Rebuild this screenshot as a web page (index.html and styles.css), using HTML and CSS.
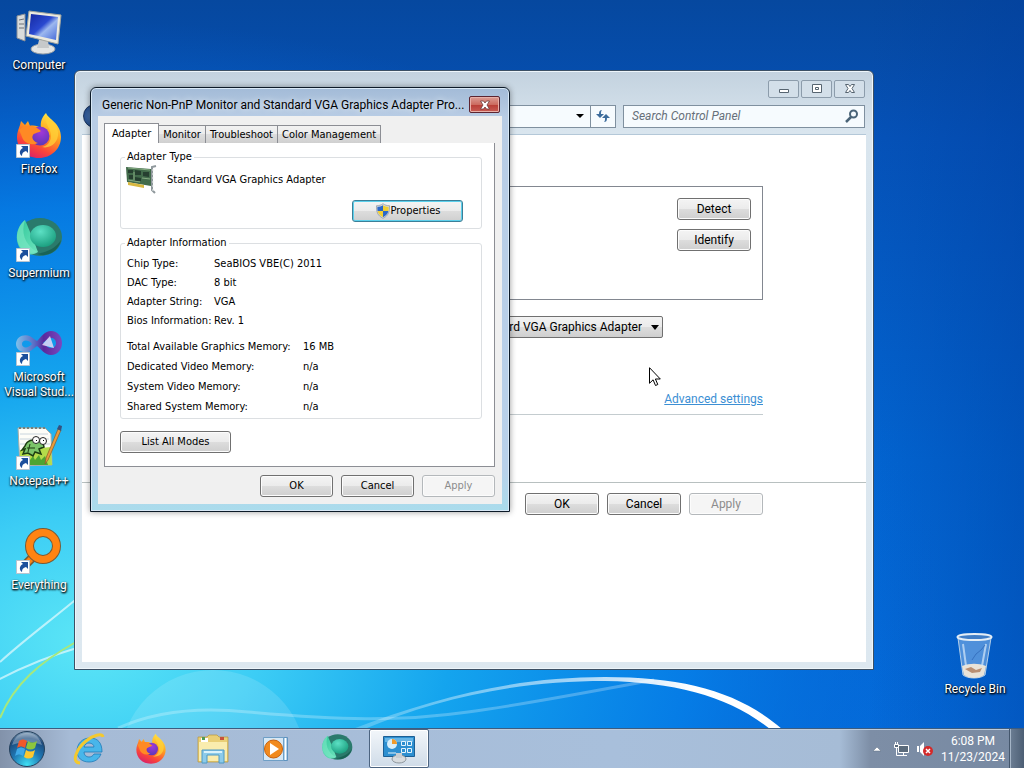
FILE: index.html
```html
<!DOCTYPE html>
<html lang="en">
<head>
  <meta charset="UTF-8" />
  <title>Desktop</title>
  <link rel="stylesheet" href="styles.css">
</head>
<body>

<svg width="0" height="0" class="defs" aria-hidden="true">
  <defs>
    <linearGradient id="ffBody" x1="0.8" y1="0" x2="0.3" y2="1">
      <stop offset="0" stop-color="#fff04a"/>
      <stop offset="0.4" stop-color="#ffa31f"/>
      <stop offset="0.75" stop-color="#fb4638"/>
      <stop offset="1" stop-color="#d9206a"/>
    </linearGradient>
    <radialGradient id="ffGlobe" cx="0.55" cy="0.3" r="0.7">
      <stop offset="0" stop-color="#a238d8"/>
      <stop offset="1" stop-color="#5b38b8"/>
    </radialGradient>
    <linearGradient id="smLight" x1="0" y1="0" x2="1" y2="1">
      <stop offset="0" stop-color="#2fc79a"/>
      <stop offset="1" stop-color="#6fe3bd"/>
    </linearGradient>
    <radialGradient id="smBall" cx="0.4" cy="0.3" r="0.8">
      <stop offset="0" stop-color="#5ce0c4"/>
      <stop offset="1" stop-color="#149878"/>
    </radialGradient>
    <linearGradient id="screen" x1="0" y1="0" x2="1" y2="1">
      <stop offset="0" stop-color="#1428a0"/>
      <stop offset="0.45" stop-color="#2a49d0"/>
      <stop offset="0.6" stop-color="#9db8ef"/>
      <stop offset="1" stop-color="#4468d8"/>
    </linearGradient>
    <linearGradient id="vs" x1="0" y1="0" x2="1" y2="0">
      <stop offset="0" stop-color="#7fc0ea"/>
      <stop offset="0.4" stop-color="#5a6cc4"/>
      <stop offset="0.6" stop-color="#5a2a9c"/>
      <stop offset="1" stop-color="#7a48c0"/>
    </linearGradient>
    <symbol id="firefox" viewBox="0 0 48 48">
      <path fill="url(#ffBody)" d="M24 46C11 46 2 37 2 25c0-5 2-9 3-12l1-4 4 4 3-4 2 5c4-1 8 0 11 2-1-6 1-11 5-15 2 6 15 10 15 24 0 12-10 21-22 21z"/>
      <circle cx="25" cy="24" r="9.500" fill="url(#ffGlobe)"/>
      <path fill="#ff8a24" d="M4 18c5-5 12-6 18-2l4 3c-3 2-7 2-8 4-2 3 1 7 5 8-7 3-14 0-16-6-1-3-2-5-3-7z"/>
      <path fill="#ffd23a" d="M31 3c-2 9 5 13 5 21 0 6-4 10-9 11 8 2 17-4 16-15C42 12 34 9 31 3z" opacity=".75"/>
    </symbol>
    <symbol id="supermium" viewBox="0 0 48 48">
      <ellipse cx="25" cy="21" rx="22" ry="19" fill="#2a7a6c"/>
      <path fill="url(#smLight)" d="M10 4C-1 13-1 30 10 37c4 2 9 2 13-1-3-8-7-18-13-32z"/>
      <ellipse cx="28" cy="20" rx="13" ry="11" fill="url(#smBall)"/>
      <path fill="#155e50" d="M22 38c10 4 22-3 24-14-4 7-13 12-24 14z" opacity=".8"/>
      <path fill="#7fe9c6" d="M10 4C6 16 9 28 22 36 10 40 1 30 2 19 3 12 6 7 10 4z" opacity=".6"/>
    </symbol>
    <symbol id="shortcut" viewBox="0 0 14 14">
      <path fill="#fff" stroke="#b8c4d0" d="M.5.500h13v13H.500z"/>
      <path fill="#1c4f9c" d="M5 2h7v7l-2-2c-3 1-4 2-4 5-3-2-3-6 1-8z"/>
    </symbol>
    <symbol id="shield" viewBox="0 0 16 16">
      <path fill="#d6dbe2" stroke="#8c9299" stroke-width=".7" d="M8 .7c2 1.500 4 2 6.500 2 .2 6-1 10-6.500 12.600C2.500 12.700 1.300 8.700 1.500 2.700c2.500 0 4.500-.5 6.500-2z"/>
      <path fill="#2c68c8" d="M8 2.200V8H2.600c-.3-1.300-.3-2.600-.2-4.200 2 0 3.800-.4 5.600-1.600z"/>
      <path fill="#f3cf32" d="M8 2.200V8h5.400c.3-1.300.3-2.600.2-4.200-2 0-3.800-.4-5.600-1.600zM8 8v6.200C5 12.700 3.200 10.700 2.600 8z"/>
      <path fill="#2c68c8" d="M8 8v6.200c3-1.500 4.800-3.500 5.400-6.200z"/>
    </symbol>
  </defs>
</svg>

<main class="desktop">
  <svg class="wallpaper" viewBox="0 0 1024 768" preserveAspectRatio="none" aria-hidden="true">
    <defs>
      <linearGradient id="sky" x1="0" y1="0" x2="0" y2="1">
        <stop offset="0" stop-color="#06489f"/>
        <stop offset="0.18" stop-color="#0552b8"/>
        <stop offset="0.6" stop-color="#0264d0"/>
        <stop offset="1" stop-color="#046cdc"/>
      </linearGradient>
      <radialGradient id="glow" gradientUnits="userSpaceOnUse" cx="0" cy="0" r="1" gradientTransform="translate(90 640) scale(860 620)">
        <stop offset="0" stop-color="#5ce6f6"/>
        <stop offset="0.2" stop-color="#3ccdf5"/>
        <stop offset="0.42" stop-color="#14a4ee"/>
        <stop offset="0.7" stop-color="#067fe8" stop-opacity=".85"/>
        <stop offset="1" stop-color="#0560d0" stop-opacity="0"/>
      </radialGradient>
      <linearGradient id="edge" x1="0" y1="0" x2="1" y2="0">
        <stop offset="0.85" stop-color="#003c9c" stop-opacity="0"/>
        <stop offset="1" stop-color="#003c9c" stop-opacity=".4"/>
      </linearGradient>
      <linearGradient id="arc" gradientUnits="userSpaceOnUse" x1="350" y1="0" x2="780" y2="0">
        <stop offset="0" stop-color="#fff" stop-opacity=".2"/>
        <stop offset="0.5" stop-color="#fff" stop-opacity=".6"/>
        <stop offset="0.8" stop-color="#fff"/>
      </linearGradient>
    </defs>
    <path fill="url(#sky)" d="M0 0h1024v768H0z"/>
    <path fill="url(#glow)" d="M0 0h1024v768H0z"/>
    <path fill="url(#edge)" d="M0 0h1024v768H0z"/>
    <circle cx="213" cy="763" r="93" fill="#fff" opacity=".13"/>
    <path fill="none" stroke="#fff" stroke-opacity=".25" stroke-width="3" d="M118 728c40-18 84-21 130-16 90 8 150 10 220 0 60-8 120-20 186-32"/>
    <path fill="url(#arc)" d="M350 730c90-35 170-53 255-53 80 0 134 15 177 52h-12c-40-32-94-47-165-48-85 0-165 16-243 49z"/>
    <path fill="none" stroke="#fff" stroke-opacity=".6" stroke-width="2" d="M-4 681c26-14 50-24 84-34M0 662c24-22 54-44 80-66"/>
    <path fill="none" stroke="#a6e87c" stroke-width="2" d="M0 718c14-34 40-56 76-76"/>
  </svg>

  <nav class="icons" aria-label="Desktop icons">
    <a class="icon" href="#">
      <svg class="pic" viewBox="0 0 48 48">
        <path fill="#d9dcdc" stroke="#8a8f96" d="M2 8l8-2v27l-8-3z"/>
        <path stroke="#6c7076" d="M4 12l5-1M4 16l5 0M4 20h5"/>
        <ellipse cx="28" cy="41" rx="12" ry="5" fill="#e3e5e4" stroke="#9ba0a4"/>
        <path fill="#c6c9ca" d="M24 32h9l1 8H22z"/>
        <path fill="#eceadf" stroke="#a2a59f" d="M14 3l32 4-3 29-32-8z"/>
        <path fill="url(#screen)" d="M16 6l27 3-2 23-27-6z"/>
      </svg>
      <span>Computer</span>
    </a>
    <a class="icon" href="#">
      <svg class="pic"><use href="#firefox"/></svg>
      <svg class="arrow"><use href="#shortcut"/></svg>
      <span>Firefox</span>
    </a>
    <a class="icon" href="#">
      <svg class="pic"><use href="#supermium"/></svg>
      <svg class="arrow"><use href="#shortcut"/></svg>
      <span>Supermium</span>
    </a>
    <a class="icon" href="#">
      <svg class="pic" viewBox="0 0 48 48">
        <path fill="url(#vs)" fill-rule="evenodd" d="M1 24c0-9 12-12 18-5l3 2c4-4 8-10 14-10 7 0 11 6 11 12s-4 12-11 12c-6 0-10-6-14-9l-4 3C12 35 1 32 1 24zm6 0c0 4 6 5 10 0-4-5-10-4-10 0zm21-1c3 3 6 5 8 5 3 0 5-2 5-5s-2-5-5-5c-2 0-5 2-8 5z"/>
        <path fill="#e4d8f6" d="M27 25l8-9 4 12z" opacity=".85"/>
      </svg>
      <svg class="arrow"><use href="#shortcut"/></svg>
      <span>Microsoft Visual Stud...</span>
    </a>
    <a class="icon" href="#">
      <svg class="pic" viewBox="0 0 48 48">
        <path fill="#fdfdf8" stroke="#a9ada5" d="M3 4h27l6 6 1 31-32 1z"/>
        <path fill="none" stroke="#77807a" stroke-width="2" stroke-dasharray="2 2" d="M4 4h26"/>
        <path stroke="#c8d4dd" d="M5 10h28M5 15h29M5 20h30"/>
        <path fill="#b4dc4a" d="M5 26l31-3 1 18H5z"/>
        <path fill="#4ea432" d="M15 36l3-4 2 4 4-5 2 5 4-4 3 9H15z"/>
        <path fill="#7cc46a" stroke="#1c3d12" stroke-width="1.500" d="M10 22c2-6 8-7 13-5l5 2 1 4-5 2 2 5-6-2-2 4-5-3-5 1 2-5-3 1z"/>
        <path stroke="#1c3d12" d="M12 24h8M15 20l-2 8"/>
        <circle cx="21" cy="16" r="3.500" fill="#fff" stroke="#222"/>
        <circle cx="28" cy="17" r="3.500" fill="#fff" stroke="#222"/>
        <path d="M21 16h1v1h-1zM28 16h1v1h-1z"/>
        <path fill="#e89c3c" stroke="#8a5a28" stroke-width=".7" d="M43 5l3 1-13 30-3 4 1-6z"/>
        <path fill="#35507e" d="M44 1l3 1-1 5-4-2z"/>
      </svg>
      <svg class="arrow"><use href="#shortcut"/></svg>
      <span>Notepad++</span>
    </a>
    <a class="icon" href="#">
      <svg class="pic" viewBox="0 0 48 48">
        <path stroke="#7b5a34" stroke-width="9" d="M19 28L8 39"/>
        <path stroke="#ff8412" stroke-width="6" d="M21 26L8 39"/>
        <circle cx="28" cy="18" r="13.500" fill="none" stroke="#7b5a34" stroke-width="9"/>
        <circle cx="28" cy="18" r="13.500" fill="none" stroke="#ff8412" stroke-width="7"/>
      </svg>
      <svg class="arrow"><use href="#shortcut"/></svg>
      <span>Everything</span>
    </a>
  </nav>

  <a class="icon recycle" href="#">
    <svg class="pic" viewBox="0 0 48 48">
      <path fill="#9cc4ee" fill-opacity=".5" stroke="#b4cfe8" d="M7 6l5 37c5 4 17 4 22 0l6-37z"/>
      <path fill="#e9e3d8" d="M11 34c8-3 16-3 24 0l-2 9c-5 4-15 4-20 0z"/>
      <path fill="#b98f72" d="M14 37l6-2 5 3 6-2-2 4-8 1z"/>
      <path stroke="#d6e8fa" stroke-width="2" stroke-opacity=".7" d="M12 12l3 22M35 12l-4 22"/>
      <path fill="none" stroke="#2c64b4" stroke-opacity=".7" d="M21 28l4-6 5-4 4-5"/>
      <ellipse cx="23.500" cy="5" rx="17" ry="3" fill="#3f7dc6" stroke="#e4eef6" stroke-width="2"/>
    </svg>
    <span>Recycle Bin</span>
  </a>

  <section class="window">
    <div class="caption">
      <button aria-label="Minimize"><svg viewBox="0 0 12 12"><path fill="#fff" stroke="#566470" d="M1.500 6.500h9v3h-9z"/></svg></button>
      <button aria-label="Maximize"><svg viewBox="0 0 12 12"><path fill="#fff" stroke="#566470" d="M1.500 1.500h9v8h-9zM4.500 4.500h3v2h-3z"/></svg></button>
      <button aria-label="Close"><svg viewBox="0 0 12 12"><path fill="#fff" stroke="#566470" d="M1.500 1.500h3L6 3.500l1.500-2h3L8 5.500l2.500 4h-3L6 7.500l-1.500 2h-3l2.500-4z"/></svg></button>
    </div>
    <div class="toolbar">
      <button class="back" aria-label="Back"></button>
      <div class="address">
        <button class="drop" aria-label="Previous locations"><svg viewBox="0 0 8 4"><path d="M0 0h8L4 4z"/></svg></button>
        <button class="refresh" aria-label="Refresh"><svg viewBox="0 0 14 14"><path fill="#3c6c9c" d="M6 1C4 1 3 2 3 5H0l4 4 4-4H5c0-2 0-3 1-4zM8 13c2 0 3-1 3-4h3l-4-4-4 4h3c0 2 0 3-1 4z"/></svg></button>
      </div>
      <div class="search">
        <input type="text" placeholder="Search Control Panel" aria-label="Search Control Panel" />
        <svg viewBox="0 0 14 14"><circle cx="8.500" cy="5" r="3.500" fill="none" stroke="#4a6478" stroke-width="2"/><path stroke="#4a6478" stroke-width="2.500" d="M6 8l-5 5"/></svg>
      </div>
    </div>
    <div class="client">
      <div class="displays">
        <button class="btn">Detect</button>
        <button class="btn">Identify</button>
      </div>
      <div class="picker">
        <select aria-label="Display">
          <option>Standard VGA Graphics Adapter</option>
        </select>
        <svg viewBox="0 0 8 5"><path d="M0 0h8L4 5z"/></svg>
      </div>
      <div class="advanced"><a href="#">Advanced settings</a></div>
      <div class="actions">
        <button class="btn">OK</button>
        <button class="btn">Cancel</button>
        <button class="btn" disabled>Apply</button>
      </div>
    </div>
  </section>

  <section class="dialog" role="dialog" aria-labelledby="dialogTitle">
    <div class="titlebar">
      <h1 id="dialogTitle">Generic Non-PnP Monitor and Standard VGA Graphics Adapter Pro...</h1>
      <button class="close" aria-label="Close"><svg viewBox="0 0 12 12"><path fill="#fff" stroke="#6b3a3a" stroke-width=".8" d="M1.500 2h3L6 4l1.500-2h3L8 6l2.500 4h-3L6 8l-1.500 2h-3L4 6z"/></svg></button>
    </div>
    <div class="sheet">
      <div class="tabs" role="tablist">
        <button role="tab" class="active" aria-selected="true">Adapter</button>
        <button role="tab">Monitor</button>
        <button role="tab">Troubleshoot</button>
        <button role="tab">Color Management</button>
      </div>
      <div class="page" role="tabpanel">
        <fieldset class="type">
          <legend>Adapter Type</legend>
          <div class="adapter">
            <svg viewBox="0 0 32 32">
              <path fill="#426b4b" d="M1 3l25 2v17L2 18z"/>
              <path fill="#263f30" d="M3 6h5v3H3zM10 6l6 1v4h-6zM18 8h6v5l-6-1zM4 11h4v4H4zM10 13l6 1v3h-6z"/>
              <path stroke="#86ab82" d="M3 4l22 2M3 16l12 2M17 14l8 1M9 8v8"/>
              <path fill="#d8b840" d="M3 18l16 3v3L3 21z"/>
              <path fill="none" stroke="#8f989c" stroke-width="2" d="M31 2l-4 1v23l3 3"/>
              <path stroke="#eef1f1" stroke-dasharray="2 2" d="M28 5v22"/>
            </svg>
            <span>Standard VGA Graphics Adapter</span>
          </div>
          <button class="btn default"><svg><use href="#shield"/></svg>Properties</button>
        </fieldset>
        <fieldset class="info">
          <legend>Adapter Information</legend>
          <dl>
            <dt>Chip Type:</dt><dd>SeaBIOS VBE(C) 2011</dd>
            <dt>DAC Type:</dt><dd>8 bit</dd>
            <dt>Adapter String:</dt><dd>VGA</dd>
            <dt>Bios Information:</dt><dd>Rev. 1</dd>
          </dl>
          <dl class="memory">
            <dt>Total Available Graphics Memory:</dt><dd>16 MB</dd>
            <dt>Dedicated Video Memory:</dt><dd>n/a</dd>
            <dt>System Video Memory:</dt><dd>n/a</dd>
            <dt>Shared System Memory:</dt><dd>n/a</dd>
          </dl>
        </fieldset>
        <button class="btn wide">List All Modes</button>
      </div>
      <div class="actions">
        <button class="btn">OK</button>
        <button class="btn">Cancel</button>
        <button class="btn" disabled>Apply</button>
      </div>
    </div>
  </section>

  <svg class="cursor" viewBox="0 0 12 20" aria-hidden="true"><path fill="#fff" stroke="#000" d="M.5.700v15.600l3.600-3.500 2.400 5.700 2.300-1-2.400-5.500h4.900z"/></svg>
</main>

<footer class="taskbar">
  <button class="start" aria-label="Start">
    <svg viewBox="0 0 38 38">
      <defs>
        <radialGradient id="orb" cx="0.5" cy="0.95" r="0.95">
          <stop offset="0" stop-color="#3fe0f4"/>
          <stop offset="0.45" stop-color="#1f78b4"/>
          <stop offset="0.8" stop-color="#1c4a7c"/>
          <stop offset="1" stop-color="#8aa5bd"/>
        </radialGradient>
      </defs>
      <circle cx="19" cy="19" r="17.500" fill="url(#orb)" stroke="#24405c"/>
      <path fill="#fff" opacity=".3" d="M4 15C7 5 14 3 19 3s12 2 15 12c-10-4-20-4-30 0z"/>
      <path fill="#f0592b" d="M11 11c3-2 5-2 8 0l-2 7c-3-2-5-2-8 0z"/>
      <path fill="#8cc63e" d="M20 11c3 2 6 2 9 0l-2 7c-3 2-6 2-9 0z"/>
      <path fill="#3fa9e8" d="M9 19c3-2 5-2 8 0l-2 7c-3-2-5-2-8 0z"/>
      <path fill="#fdc82f" d="M18 20c3 2 6 2 9 0l-2 7c-3 2-6 2-9 0z"/>
    </svg>
  </button>
  <div class="apps">
    <button aria-label="Internet Explorer">
      <svg viewBox="0 0 32 32">
        <path fill="#48b6ea" stroke="#1f7ab8" stroke-width=".8" d="M17 5C9 5 4 11 4 18c0 7 5 11 12 11 6 0 10-3 12-8h-7c-1 2-3 3-5 3-3 0-5-2-5-5h18C29 10 25 5 17 5zm-6 9c1-3 3-4 5-4 3 0 5 2 5 4z"/>
        <path fill="none" stroke="#f4c92e" stroke-width="3" d="M7 30C-2 30 3 16 13 8 20 2 29 0 30 4"/>
      </svg>
    </button>
    <button aria-label="Firefox"><svg><use href="#firefox"/></svg></button>
    <button aria-label="Windows Explorer">
      <svg viewBox="0 0 32 32">
        <path fill="#e9cf76" stroke="#b8963c" stroke-width=".7" d="M1 4h9l2-2h8l2 2h9v25H1z"/>
        <path fill="#f9ecae" d="M2 9h28v19H2z"/>
        <path fill="#fff" d="M4 5h7v4H4z"/><path fill="#4f9a55" d="M5 4h3v3H5z"/><path fill="#c8503c" d="M23 4h4v3h-4z"/>
        <path fill="#8ccbea" stroke="#4d98c4" d="M5 17h22v13h-5v-8H10v8H5z"/>
        <path fill="#d9f2fb" d="M7 18h18v2H7z"/>
      </svg>
    </button>
    <button aria-label="Media Player">
      <svg viewBox="0 0 32 32">
        <path fill="#b5d4ec" stroke="#5f93bf" d="M8.500 4.500h20v23h-20z"/>
        <path stroke="#fff" d="M26.500 5v22"/>
        <path fill="#d6e8f5" stroke="#6f9fc6" d="M4.500 4.500h20v23h-20z"/>
        <circle cx="14.500" cy="16" r="9" fill="#f18a1e" stroke="#c8600c"/>
        <path fill="#fff" d="M11 10l9 6-9 6z"/>
      </svg>
    </button>
    <button aria-label="Supermium"><svg><use href="#supermium"/></svg></button>
    <button class="running" aria-label="Display">
      <svg viewBox="0 0 32 32">
        <path fill="#2d8fd0" stroke="#1c5f94" d="M.5 3.500h31v20H.5z"/>
        <path fill="#66b5e6" d="M2 5h28v4H2z"/>
        <circle cx="9" cy="11" r="5" fill="#d7eefb"/><path fill="#f09a2c" d="M9 11V6a5 5 0 0 1 5 5z"/>
        <path fill="none" stroke="#e4f4fc" d="M18.500 8.500h4v4h-4zM24.500 8.500h4v4h-4zM18.500 15.500h4v4h-4zM24.500 15.500h4v4h-4zM5 20h8"/>
        <ellipse cx="16" cy="26" rx="7" ry="4" fill="#d8dcdf" stroke="#8e969c"/>
        <path fill="#c9ced2" d="M13 20h6v5h-6z"/>
      </svg>
    </button>
  </div>
  <div class="tray">
    <button aria-label="Show hidden icons"><svg viewBox="0 0 16 16"><path fill="#fff" stroke="#5c6c80" stroke-width=".5" d="M4 10h8L8 6z"/></svg></button>
    <button aria-label="Network">
      <svg viewBox="0 0 16 16">
        <path fill="#5b6b7c" stroke="#fff" d="M5.500 4.500h10v7h-10z"/>
        <path fill="none" stroke="#fff" d="M10.500 12v2M7 14.500h7M3.500 6v8.500H7"/>
        <path fill="#5b6b7c" stroke="#fff" d="M1.500 3.500h4v3h-4zM2.500 1v2M4.500 1v2"/>
      </svg>
    </button>
    <button aria-label="Volume muted">
      <svg viewBox="0 0 16 16">
        <path fill="#fff" d="M0 5h2v6H0zM3 5l4-4v14l-4-4z"/>
        <circle cx="11" cy="10" r="5" fill="#d42a2a"/>
        <path stroke="#fff" stroke-width="1.500" d="M9 8l4 4M13 8l-4 4"/>
      </svg>
    </button>
  </div>
  <div class="clock">
    <time>6:08 PM</time>
    <time>11/23/2024</time>
  </div>
  <button class="peek" aria-label="Show desktop"></button>
</footer>

</body>
</html>
```

FILE: styles.css
```css
* {
  box-sizing: border-box;
}
body {
  margin: 0;
  height: 100vh;
  display: flex;
  flex-direction: column;
  overflow: hidden;
  font-family: Roboto, "Open Sans", sans-serif;
  font-size: 12px;
  line-height: 16px;
  color: #000;
}
button, input, select {
  font: inherit;
  color: inherit;
  margin: 0;
  padding: 0;
}
.defs {
  position: absolute;
}

/* desktop */
.desktop {
  position: relative;
  flex: 1;
  min-height: 0;
}
.wallpaper {
  position: absolute;
  top: 0;
  left: 0;
  width: 100vw;
  height: 100vh;
}
.icons {
  position: relative;
  width: 78px;
  padding-top: 8px;
}
.icon {
  position: relative;
  display: flex;
  flex-direction: column;
  align-items: center;
  width: 78px;
  height: 104px;
  color: #fff;
  line-height: 15px;
  text-align: center;
  text-decoration: none;
  text-shadow: 0 1px 2px #000, 1px 1px 2px #000;
}
.icon .pic {
  width: 48px;
  height: 48px;
  margin-bottom: 2px;
}
.icon .arrow {
  position: absolute;
  left: 16px;
  top: 32px;
  width: 14px;
  height: 14px;
}
.recycle {
  position: absolute;
  right: 10px;
  bottom: 0;
  height: 96px;
}

/* control panel window */
.window {
  position: absolute;
  top: 70px;
  left: 74px;
  right: 150px;
  bottom: 58px;
  display: flex;
  flex-direction: column;
  padding: 0 7px 7px;
  border: 1px solid #3c5064;
  border-radius: 6px 6px 0 0;
  background: linear-gradient(#c3d2df, #d9e5ee 60px, #dde8f0);
  box-shadow: inset 0 0 0 1px #eef6fb;
}
.caption {
  display: flex;
  justify-content: flex-end;
  gap: 2px;
  padding: 9px 1px 0;
}
.caption button {
  display: flex;
  align-items: center;
  justify-content: center;
  width: 31px;
  height: 18px;
  border: 1px solid #8c9cab;
  border-radius: 2px;
  background: #d3dfe9;
}
.caption svg {
  width: 12px;
  height: 12px;
}
.toolbar {
  display: flex;
  align-items: center;
  gap: 7px;
  padding: 6px 1px;
}
.back {
  width: 24px;
  height: 24px;
  margin-right: 30px;
  border: 1px solid #1c355c;
  border-radius: 50%;
  background: radial-gradient(#5c8cc8, #123878);
}
.address, .search {
  display: flex;
  align-items: center;
  height: 23px;
  border: 1px solid #7f909f;
  background: #f6fbfe;
}
.address {
  flex: 1;
  justify-content: flex-end;
}
.address button {
  display: flex;
  align-items: center;
  justify-content: center;
  height: 21px;
  border: 0;
  background: none;
}
.drop {
  width: 20px;
}
.drop svg {
  width: 8px;
  height: 4px;
}
.address .refresh {
  width: 25px;
  border-left: 1px solid #7f909f;
}
.refresh svg {
  width: 14px;
  height: 14px;
}
.search {
  width: 242px;
  padding: 0 5px 0 8px;
}
.search input {
  flex: 1;
  min-width: 0;
  border: 0;
  outline: none;
  background: none;
}
.search input::placeholder {
  color: #66707a;
  font-style: italic;
}
.search svg {
  width: 14px;
  height: 14px;
}
.client {
  flex: 1;
  padding-top: 51px;
  border-top: 1px solid #b4c8d8;
  background: #fff;
}
.displays {
  display: flex;
  flex-direction: column;
  align-items: flex-end;
  gap: 9px;
  height: 114px;
  margin: 0 103px 0 70px;
  padding: 11px;
  border: 1px solid #828790;
}
.picker {
  position: relative;
  display: flex;
  justify-content: flex-end;
  margin: 16px 203px 0 70px;
}
.picker select {
  width: 320px;
  height: 22px;
  padding-right: 20px;
  border: 1px solid #707070;
  border-radius: 2px;
  appearance: none;
  background: linear-gradient(#f2f2f2, #ebebeb 50%, #dddddd 50%, #cfcfcf);
  text-align-last: right;
}
.picker svg {
  position: absolute;
  right: 4px;
  top: 9px;
  width: 8px;
  height: 5px;
}
.advanced {
  margin: 53px 103px 0 70px;
  padding-bottom: 7px;
  border-bottom: 1px solid #c4cccf;
  text-align: right;
}
.advanced a {
  color: #3c8fd4;
}
.client .actions {
  margin-top: 67px;
  padding: 10px 103px 0 0;
  border-top: 1px solid #b8c0c0;
}
.actions {
  display: flex;
  justify-content: flex-end;
  gap: 8px;
}
.btn {
  display: flex;
  align-items: center;
  justify-content: center;
  width: 74px;
  height: 22px;
  border: 1px solid #707070;
  border-radius: 3px;
  background: linear-gradient(#f4f4f4, #ebebeb 50%, #dddddd 50%, #cfcfcf);
  box-shadow: inset 0 0 0 1px #fcfcfc;
}
.btn:disabled {
  border-color: #b4b8bb;
  background: #f5f5f5;
  color: #8c8c8c;
}

/* adapter properties dialog */
.dialog {
  position: absolute;
  top: 87px;
  left: 90px;
  width: 420px;
  padding: 0 7px 7px;
  border: 1px solid #0c1a28;
  border-radius: 6px 6px 0 0;
  background: linear-gradient(#a3bbd7, #b9cde5 30px, #b9d1ea 90%, #aadcec);
  box-shadow: inset 0 0 0 1px #d8e8f6, 0 0 6px rgba(0, 0, 0, 0.4);
}
.titlebar {
  display: flex;
  align-items: center;
  justify-content: space-between;
  height: 28px;
  padding: 5px 2px 0 4px;
}
.titlebar h1 {
  margin: 0;
  font-size: 12px;
  font-weight: normal;
  white-space: nowrap;
  text-shadow: 0 0 6px #fff;
}
.close {
  display: flex;
  align-items: center;
  justify-content: center;
  flex: none;
  width: 31px;
  height: 17px;
  border: 1px solid #5c2430;
  border-radius: 2px;
  background: linear-gradient(#dc9c94, #cc6c60 50%, #b83c34 50%, #c85c54);
  box-shadow: inset 0 0 0 1px #e8b0a8;
}
.close svg {
  width: 12px;
  height: 12px;
}
.sheet {
  padding: 7px 7px 7px 6px;
  background: #f0f0f0;
  font-family: "DejaVu Sans Condensed", "DejaVu Sans", sans-serif;
  font-size: 11px;
}
.tabs {
  display: flex;
  align-items: flex-end;
}
.tabs button {
  height: 18px;
  padding: 0 4px;
  border: 1px solid #8c8e94;
  border-bottom: 0;
  border-left-width: 0;
  background: linear-gradient(#f2f2f2, #ebebeb 50%, #dddddd 50%, #d0d0d0);
}
.tabs .active {
  height: 20px;
  padding: 0 7px;
  border-left-width: 1px;
  background: #fff;
}
.page {
  padding: 6px 12px 13px 15px;
  border: 1px solid #8c8e94;
  border-top: 0;
  background: #fff;
}
fieldset {
  margin: 0;
  min-width: 0;
  padding: 0 6px;
  border: 1px solid #dcdfe2;
  border-radius: 3px;
}
legend {
  padding: 0 2px;
  margin-left: -2px;
}
.type {
  height: 80px;
}
.adapter {
  display: flex;
  align-items: center;
  gap: 10px;
  height: 30px;
}
.adapter svg {
  width: 32px;
  height: 32px;
  margin-left: -2px;
}
.default {
  width: 111px;
  margin: 5px 12px 0 auto;
  border-color: #3c7f98;
  box-shadow: inset 0 0 0 1px #5cd0ec;
}
.default svg {
  width: 16px;
  height: 16px;
}
.info {
  height: 184px;
  margin-top: 6px;
}
dl {
  display: grid;
  grid-template-columns: 87px 1fr;
  margin: 3px 0 0;
  line-height: 19px;
}
dl.memory {
  grid-template-columns: 176px 1fr;
  margin-top: 7px;
  line-height: 20px;
}
dd {
  margin: 0;
}
.wide {
  width: 111px;
  margin-top: 12px;
}
.sheet .actions {
  margin-top: 8px;
}
.sheet .actions .btn {
  width: 73px;
}

.cursor {
  position: absolute;
  left: 649px;
  top: 367px;
  width: 12px;
  height: 20px;
}

/* taskbar */
.taskbar {
  position: relative;
  display: flex;
  align-items: stretch;
  height: 40px;
  border-top: 1px solid #3c5c80;
  background: linear-gradient(90deg, #8292aa, #a6bbd6 70px, #a8bfdb 60%, #a6bcd6 82%, #7d8ea6 85%, #7789a2);
  box-shadow: inset 0 1px 0 #bccbdc;
}
.taskbar button {
  display: flex;
  align-items: center;
  justify-content: center;
  border: 0;
  background: none;
}
.taskbar .start {
  width: 54px;
  margin-right: 5px;
}
.start svg {
  width: 38px;
  height: 38px;
}
.apps {
  display: flex;
  flex: 1;
  gap: 2px;
}
.apps button {
  width: 60px;
}
.apps svg {
  width: 32px;
  height: 32px;
}
.taskbar .running {
  border: 1px solid #4c6480;
  border-radius: 2px;
  background: linear-gradient(#f2f6fa, #d0dce8);
  box-shadow: inset 0 0 0 1px #fff;
}
.tray {
  display: flex;
  align-items: center;
  gap: 8px;
}
.tray svg {
  width: 16px;
  height: 16px;
}
.clock {
  display: flex;
  flex-direction: column;
  justify-content: center;
  width: 76px;
  padding-left: 4px;
  color: #fff;
  text-align: center;
}
.taskbar .peek {
  width: 15px;
  border-left: 1px solid #44566c;
  background: linear-gradient(90deg, #6c7e94, #4c5e74);
  box-shadow: inset 1px 0 0 #a4b4c6;
}
```
